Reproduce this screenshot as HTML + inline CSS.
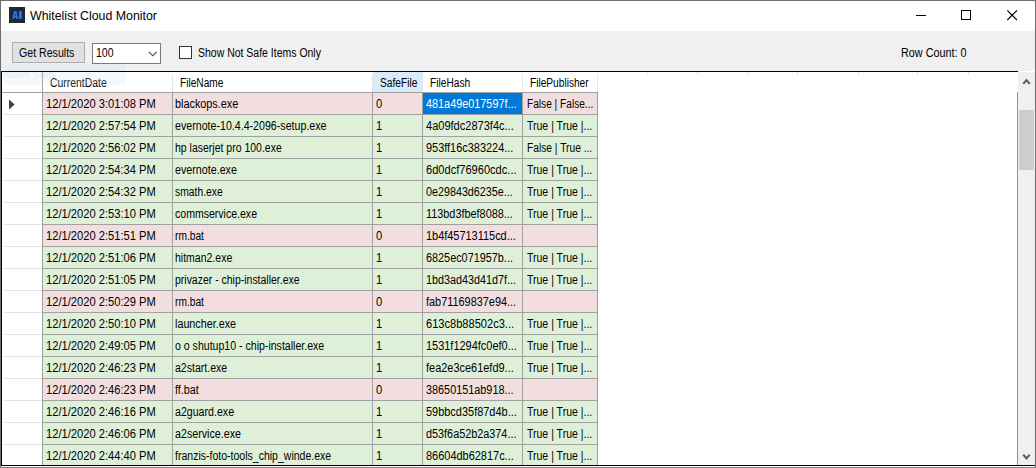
<!DOCTYPE html>
<html><head><meta charset="utf-8"><title>Whitelist Cloud Monitor</title>
<style>
html,body{margin:0;padding:0;}
body{width:1036px;height:468px;overflow:hidden;background:#fff;font-family:"Liberation Sans",sans-serif;font-size:12px;color:#000;position:relative;}
#win{position:absolute;left:0;top:0;width:1036px;height:468px;overflow:hidden;background:#fff;}
.t{position:absolute;white-space:nowrap;transform-origin:0 0;font-size:12px;line-height:14px;}
.tt{top:9px;}
.bt2{top:46px;}
.ht{top:76px;}
.ct{top:4px;}
.selt{color:#fff;}
#title{position:absolute;left:0;top:0;width:1036px;height:31px;background:#fff;}
#icon{position:absolute;left:9px;top:7px;width:16px;height:16px;background:#1e2733;}
#toolbar{position:absolute;left:0;top:31px;width:1036px;height:40px;background:#f0f0f0;}
#btn_{position:absolute;left:12px;top:42px;width:71px;height:19px;border:1px solid #adadad;background:#e1e1e1;}
#combo_{position:absolute;left:92px;top:43px;width:67px;height:19px;border:1px solid #7a7a7a;background:#fff;}
#chk_{position:absolute;left:179px;top:46px;width:11px;height:11px;border:1px solid #333;background:#fff;}
#grid{position:absolute;left:1px;top:71px;width:1034px;height:395px;background:#fff;overflow:hidden;}
#gridin{position:absolute;left:-1px;top:-71px;width:1036px;height:468px;}
.bt{position:absolute;background:#000;}
.hdr{position:absolute;top:72px;height:20px;}
.hdr i{position:absolute;right:0;top:2px;width:1px;height:18px;background:#e5e5e5;}
.hdr.hl{background:#d9ebf9;}
.hdr.hl i{display:none;}
#hline{position:absolute;left:2px;top:92px;width:596px;height:1px;background:#a0a0a0;}
.row{position:absolute;left:0;height:22px;width:1036px;}
.row .c{position:absolute;top:0;height:21px;border-right:1px solid #a0a0a0;border-bottom:1px solid #a0a0a0;}
.row.r .c{background:#f2dede;}
.row.g .c{background:#dff0d8;}
.row .c.sel{background:#0078d7;}
.rh{position:absolute;left:2px;top:0;width:40px;height:22px;border-right:1px solid #a0a0a0;background:#fff;}
.rh b{position:absolute;left:2px;bottom:0;width:38px;height:1px;background:#e3e3e3;}
#sb{position:absolute;left:1018px;top:72px;width:17px;height:393px;background:#f0f0f0;}
#sbl{position:absolute;left:1017px;top:92px;width:1px;height:373px;background:#909090;}
#thumb{position:absolute;left:1019px;top:110px;width:15px;height:60px;background:#cdcdcd;}
</style></head><body>
<div id="win">
<div id="title"><div id="icon"><svg width="16" height="16" viewBox="0 0 16 16" style="position:absolute;left:0;top:0"><path d="M3.3 12 L5 4 L7.5 4 L9.1 12 L7.3 12 L7 10.4 L5.4 10.4 L5.1 12 Z M5.7 8.9 L6.7 8.9 L6.25 6.3 Z" fill="#2a74ea" fill-rule="evenodd"/><rect x="9.9" y="4" width="2.9" height="8" fill="#2a74ea"/></svg></div>
<svg class="wc" style="position:absolute;left:905px;top:0" width="131" height="31" viewBox="0 0 131 31"><path d="M11 15.5 H21" stroke="#000" stroke-width="1" fill="none"/><rect x="56.5" y="10.5" width="9" height="9" stroke="#000" stroke-width="1" fill="none"/><path d="M102.3 10.3 L112 20 M112 10.3 L102.3 20" stroke="#000" stroke-width="1.1" fill="none"/></svg></div>
<span id="ttl" class="t tt" style="left:29.89px;transform:scaleX(1.0286);">Whitelist Cloud Monitor</span>
<div id="toolbar"></div>
<div id="btn_"></div><span id="btn" class="t bt2" style="left:19.31px;transform:scaleX(0.8840);">Get Results</span>
<div id="combo_"><svg width="10" height="7" viewBox="0 0 10 7" style="position:absolute;left:54.6px;top:7px"><path d="M0.9 0.9 L4.8 4.8 L8.7 0.9" stroke="#404040" stroke-width="1.1" fill="none"/></svg></div><span id="combo" class="t bt2" style="left:95.82px;transform:scaleX(0.8763);">100</span>
<div id="chk_"></div><span id="chk" class="t bt2" style="left:197.94px;transform:scaleX(0.8736);">Show Not Safe Items Only</span>
<span id="rc" class="t bt2" style="left:900.98px;transform:scaleX(0.9010);">Row Count: 0</span>
<div id="grid"><div id="gridin">
<div class="hdr" style="left:2px;width:41px"><i style="top:0;height:20px;background:#a0a0a0"></i></div>
<div class="hdr" style="left:43px;width:130px"><i></i></div><span id="h0" class="t ht" style="left:49.62px;transform:scaleX(0.8672);">CurrentDate</span>
<div class="hdr" style="left:173px;width:200px"><i></i></div><span id="h1" class="t ht" style="left:180.04px;transform:scaleX(0.8441);">FileName</span>
<div class="hdr hl" style="left:373px;width:50px"><i></i></div><span id="h2" class="t ht" style="left:379.97px;transform:scaleX(0.8502);">SafeFile</span>
<div class="hdr" style="left:423px;width:100px"><i></i></div><span id="h3" class="t ht" style="left:430.24px;transform:scaleX(0.8476);">FileHash</span>
<div class="hdr" style="left:523px;width:75px"><i></i></div><span id="h4" class="t ht" style="left:530.14px;transform:scaleX(0.8454);">FilePublisher</span>

<div id="hline"></div><div style="position:absolute;left:647px;top:72px;width:1px;height:2px;background:#e9e9e9"></div><div style="position:absolute;left:697px;top:72px;width:1px;height:2px;background:#dedede"></div><div style="position:absolute;left:747px;top:72px;width:1px;height:2px;background:#dedede"></div><div style="position:absolute;left:797px;top:72px;width:1px;height:2px;background:#dedede"></div><div style="position:absolute;left:858px;top:72px;width:1px;height:2px;background:#dedede"></div><div style="position:absolute;left:917px;top:72px;width:1px;height:2px;background:#dedede"></div><div style="position:absolute;left:968px;top:72px;width:1px;height:2px;background:#dedede"></div>
<div class="row r" style="top:93px"><div class="rh"><svg width="8" height="11" viewBox="0 0 8 11" style="position:absolute;left:7px;top:6px"><path d="M0 0.5 L5.6 5.5 L0 10.5 Z" fill="#404040"/></svg><b></b></div><div class="c" style="left:43px;width:129px"></div><span id="r0c0" class="t ct " style="left:46.30px;transform:scaleX(0.9300);">12/1/2020 3:01:08 PM</span><div class="c" style="left:173px;width:199px"></div><span id="r0c1" class="t ct " style="left:175.30px;transform:scaleX(0.9029);">blackops.exe</span><div class="c" style="left:373px;width:49px"></div><span id="r0c2" class="t ct " style="left:376.24px;transform:scaleX(0.9300);">0</span><div class="c sel" style="left:423px;width:99px"></div><span id="r0c3" class="t ct selt " style="left:426.20px;transform:scaleX(0.9044);">481a49e017597f...</span><div class="c" style="left:523px;width:74px"></div><span id="r0c4" class="t ct " style="left:526.90px;transform:scaleX(0.8448);">False | False...</span></div>
<div class="row g" style="top:115px"><div class="rh"><b></b></div><div class="c" style="left:43px;width:129px"></div><span id="r1c0" class="t ct " style="left:46.30px;transform:scaleX(0.9300);">12/1/2020 2:57:54 PM</span><div class="c" style="left:173px;width:199px"></div><span id="r1c1" class="t ct " style="left:175.30px;transform:scaleX(0.8871);">evernote-10.4.4-2096-setup.exe</span><div class="c" style="left:373px;width:49px"></div><span id="r1c2" class="t ct " style="left:375.80px;transform:scaleX(0.9300);">1</span><div class="c" style="left:423px;width:99px"></div><span id="r1c3" class="t ct " style="left:426.20px;transform:scaleX(0.9198);">4a09fdc2873f4c...</span><div class="c" style="left:523px;width:74px"></div><span id="r1c4" class="t ct " style="left:526.90px;transform:scaleX(0.8758);">True | True |...</span></div>
<div class="row g" style="top:137px"><div class="rh"><b></b></div><div class="c" style="left:43px;width:129px"></div><span id="r2c0" class="t ct " style="left:46.30px;transform:scaleX(0.9300);">12/1/2020 2:56:02 PM</span><div class="c" style="left:173px;width:199px"></div><span id="r2c1" class="t ct " style="left:175.30px;transform:scaleX(0.8745);">hp laserjet pro 100.exe</span><div class="c" style="left:373px;width:49px"></div><span id="r2c2" class="t ct " style="left:375.80px;transform:scaleX(0.9300);">1</span><div class="c" style="left:423px;width:99px"></div><span id="r2c3" class="t ct " style="left:426.20px;transform:scaleX(0.9109);">953ff16c383224...</span><div class="c" style="left:523px;width:74px"></div><span id="r2c4" class="t ct " style="left:526.90px;transform:scaleX(0.8526);">False | True ...</span></div>
<div class="row g" style="top:159px"><div class="rh"><b></b></div><div class="c" style="left:43px;width:129px"></div><span id="r3c0" class="t ct " style="left:46.30px;transform:scaleX(0.9300);">12/1/2020 2:54:34 PM</span><div class="c" style="left:173px;width:199px"></div><span id="r3c1" class="t ct " style="left:175.30px;transform:scaleX(0.8927);">evernote.exe</span><div class="c" style="left:373px;width:49px"></div><span id="r3c2" class="t ct " style="left:375.80px;transform:scaleX(0.9300);">1</span><div class="c" style="left:423px;width:99px"></div><span id="r3c3" class="t ct " style="left:426.20px;transform:scaleX(0.9231);">6d0dcf76960cdc...</span><div class="c" style="left:523px;width:74px"></div><span id="r3c4" class="t ct " style="left:526.90px;transform:scaleX(0.8758);">True | True |...</span></div>
<div class="row g" style="top:181px"><div class="rh"><b></b></div><div class="c" style="left:43px;width:129px"></div><span id="r4c0" class="t ct " style="left:46.30px;transform:scaleX(0.9300);">12/1/2020 2:54:32 PM</span><div class="c" style="left:173px;width:199px"></div><span id="r4c1" class="t ct " style="left:175.30px;transform:scaleX(0.8635);">smath.exe</span><div class="c" style="left:373px;width:49px"></div><span id="r4c2" class="t ct " style="left:375.80px;transform:scaleX(0.9300);">1</span><div class="c" style="left:423px;width:99px"></div><span id="r4c3" class="t ct " style="left:426.20px;transform:scaleX(0.8962);">0e29843d6235e...</span><div class="c" style="left:523px;width:74px"></div><span id="r4c4" class="t ct " style="left:526.90px;transform:scaleX(0.8758);">True | True |...</span></div>
<div class="row g" style="top:203px"><div class="rh"><b></b></div><div class="c" style="left:43px;width:129px"></div><span id="r5c0" class="t ct " style="left:46.30px;transform:scaleX(0.9300);">12/1/2020 2:53:10 PM</span><div class="c" style="left:173px;width:199px"></div><span id="r5c1" class="t ct " style="left:175.30px;transform:scaleX(0.8784);">commservice.exe</span><div class="c" style="left:373px;width:49px"></div><span id="r5c2" class="t ct " style="left:375.80px;transform:scaleX(0.9300);">1</span><div class="c" style="left:423px;width:99px"></div><span id="r5c3" class="t ct " style="left:426.20px;transform:scaleX(0.9056);">113bd3fbef8088...</span><div class="c" style="left:523px;width:74px"></div><span id="r5c4" class="t ct " style="left:526.90px;transform:scaleX(0.8758);">True | True |...</span></div>
<div class="row r" style="top:225px"><div class="rh"><b></b></div><div class="c" style="left:43px;width:129px"></div><span id="r6c0" class="t ct " style="left:46.30px;transform:scaleX(0.9300);">12/1/2020 2:51:51 PM</span><div class="c" style="left:173px;width:199px"></div><span id="r6c1" class="t ct " style="left:175.30px;transform:scaleX(0.8500);">rm.bat</span><div class="c" style="left:373px;width:49px"></div><span id="r6c2" class="t ct " style="left:376.24px;transform:scaleX(0.9300);">0</span><div class="c" style="left:423px;width:99px"></div><span id="r6c3" class="t ct " style="left:426.20px;transform:scaleX(0.9115);">1b4f45713115cd...</span><div class="c" style="left:523px;width:74px"></div></div>
<div class="row g" style="top:247px"><div class="rh"><b></b></div><div class="c" style="left:43px;width:129px"></div><span id="r7c0" class="t ct " style="left:46.30px;transform:scaleX(0.9300);">12/1/2020 2:51:06 PM</span><div class="c" style="left:173px;width:199px"></div><span id="r7c1" class="t ct " style="left:175.30px;transform:scaleX(0.8753);">hitman2.exe</span><div class="c" style="left:373px;width:49px"></div><span id="r7c2" class="t ct " style="left:375.80px;transform:scaleX(0.9300);">1</span><div class="c" style="left:423px;width:99px"></div><span id="r7c3" class="t ct " style="left:426.20px;transform:scaleX(0.9046);">6825ec071957b...</span><div class="c" style="left:523px;width:74px"></div><span id="r7c4" class="t ct " style="left:526.90px;transform:scaleX(0.8758);">True | True |...</span></div>
<div class="row g" style="top:269px"><div class="rh"><b></b></div><div class="c" style="left:43px;width:129px"></div><span id="r8c0" class="t ct " style="left:46.30px;transform:scaleX(0.9300);">12/1/2020 2:51:05 PM</span><div class="c" style="left:173px;width:199px"></div><span id="r8c1" class="t ct " style="left:175.30px;transform:scaleX(0.8725);">privazer - chip-installer.exe</span><div class="c" style="left:373px;width:49px"></div><span id="r8c2" class="t ct " style="left:375.80px;transform:scaleX(0.9300);">1</span><div class="c" style="left:423px;width:99px"></div><span id="r8c3" class="t ct " style="left:426.20px;transform:scaleX(0.8994);">1bd3ad43d41d7f...</span><div class="c" style="left:523px;width:74px"></div><span id="r8c4" class="t ct " style="left:526.90px;transform:scaleX(0.8758);">True | True |...</span></div>
<div class="row r" style="top:291px"><div class="rh"><b></b></div><div class="c" style="left:43px;width:129px"></div><span id="r9c0" class="t ct " style="left:46.30px;transform:scaleX(0.9300);">12/1/2020 2:50:29 PM</span><div class="c" style="left:173px;width:199px"></div><span id="r9c1" class="t ct " style="left:175.30px;transform:scaleX(0.8500);">rm.bat</span><div class="c" style="left:373px;width:49px"></div><span id="r9c2" class="t ct " style="left:376.24px;transform:scaleX(0.9300);">0</span><div class="c" style="left:423px;width:99px"></div><span id="r9c3" class="t ct " style="left:426.20px;transform:scaleX(0.9086);">fab71169837e94...</span><div class="c" style="left:523px;width:74px"></div></div>
<div class="row g" style="top:313px"><div class="rh"><b></b></div><div class="c" style="left:43px;width:129px"></div><span id="r10c0" class="t ct " style="left:46.30px;transform:scaleX(0.9300);">12/1/2020 2:50:10 PM</span><div class="c" style="left:173px;width:199px"></div><span id="r10c1" class="t ct " style="left:175.30px;transform:scaleX(0.8970);">launcher.exe</span><div class="c" style="left:373px;width:49px"></div><span id="r10c2" class="t ct " style="left:375.80px;transform:scaleX(0.9300);">1</span><div class="c" style="left:423px;width:99px"></div><span id="r10c3" class="t ct " style="left:426.20px;transform:scaleX(0.9230);">613c8b88502c3...</span><div class="c" style="left:523px;width:74px"></div><span id="r10c4" class="t ct " style="left:526.90px;transform:scaleX(0.8758);">True | True |...</span></div>
<div class="row g" style="top:335px"><div class="rh"><b></b></div><div class="c" style="left:43px;width:129px"></div><span id="r11c0" class="t ct " style="left:46.30px;transform:scaleX(0.9300);">12/1/2020 2:49:05 PM</span><div class="c" style="left:173px;width:199px"></div><span id="r11c1" class="t ct " style="left:175.30px;transform:scaleX(0.8804);">o o shutup10 - chip-installer.exe</span><div class="c" style="left:373px;width:49px"></div><span id="r11c2" class="t ct " style="left:375.80px;transform:scaleX(0.9300);">1</span><div class="c" style="left:423px;width:99px"></div><span id="r11c3" class="t ct " style="left:426.20px;transform:scaleX(0.9129);">1531f1294fc0ef0...</span><div class="c" style="left:523px;width:74px"></div><span id="r11c4" class="t ct " style="left:526.90px;transform:scaleX(0.8758);">True | True |...</span></div>
<div class="row g" style="top:357px"><div class="rh"><b></b></div><div class="c" style="left:43px;width:129px"></div><span id="r12c0" class="t ct " style="left:46.30px;transform:scaleX(0.9300);">12/1/2020 2:46:23 PM</span><div class="c" style="left:173px;width:199px"></div><span id="r12c1" class="t ct " style="left:175.30px;transform:scaleX(0.8779);">a2start.exe</span><div class="c" style="left:373px;width:49px"></div><span id="r12c2" class="t ct " style="left:375.80px;transform:scaleX(0.9300);">1</span><div class="c" style="left:423px;width:99px"></div><span id="r12c3" class="t ct " style="left:426.20px;transform:scaleX(0.9131);">fea2e3ce61efd9...</span><div class="c" style="left:523px;width:74px"></div><span id="r12c4" class="t ct " style="left:526.90px;transform:scaleX(0.8758);">True | True |...</span></div>
<div class="row r" style="top:379px"><div class="rh"><b></b></div><div class="c" style="left:43px;width:129px"></div><span id="r13c0" class="t ct " style="left:46.30px;transform:scaleX(0.9300);">12/1/2020 2:46:23 PM</span><div class="c" style="left:173px;width:199px"></div><span id="r13c1" class="t ct " style="left:175.30px;transform:scaleX(0.8989);">ff.bat</span><div class="c" style="left:373px;width:49px"></div><span id="r13c2" class="t ct " style="left:376.24px;transform:scaleX(0.9300);">0</span><div class="c" style="left:423px;width:99px"></div><span id="r13c3" class="t ct " style="left:426.20px;transform:scaleX(0.9045);">38650151ab918...</span><div class="c" style="left:523px;width:74px"></div></div>
<div class="row g" style="top:401px"><div class="rh"><b></b></div><div class="c" style="left:43px;width:129px"></div><span id="r14c0" class="t ct " style="left:46.30px;transform:scaleX(0.9300);">12/1/2020 2:46:16 PM</span><div class="c" style="left:173px;width:199px"></div><span id="r14c1" class="t ct " style="left:175.30px;transform:scaleX(0.8848);">a2guard.exe</span><div class="c" style="left:373px;width:49px"></div><span id="r14c2" class="t ct " style="left:375.80px;transform:scaleX(0.9300);">1</span><div class="c" style="left:423px;width:99px"></div><span id="r14c3" class="t ct " style="left:426.20px;transform:scaleX(0.9129);">59bbcd35f87d4b...</span><div class="c" style="left:523px;width:74px"></div><span id="r14c4" class="t ct " style="left:526.90px;transform:scaleX(0.8758);">True | True |...</span></div>
<div class="row g" style="top:423px"><div class="rh"><b></b></div><div class="c" style="left:43px;width:129px"></div><span id="r15c0" class="t ct " style="left:46.30px;transform:scaleX(0.9300);">12/1/2020 2:46:06 PM</span><div class="c" style="left:173px;width:199px"></div><span id="r15c1" class="t ct " style="left:175.30px;transform:scaleX(0.8919);">a2service.exe</span><div class="c" style="left:373px;width:49px"></div><span id="r15c2" class="t ct " style="left:375.80px;transform:scaleX(0.9300);">1</span><div class="c" style="left:423px;width:99px"></div><span id="r15c3" class="t ct " style="left:426.20px;transform:scaleX(0.9034);">d53f6a52b2a374...</span><div class="c" style="left:523px;width:74px"></div><span id="r15c4" class="t ct " style="left:526.90px;transform:scaleX(0.8758);">True | True |...</span></div>
<div class="row g" style="top:445px"><div class="rh"><b></b></div><div class="c" style="left:43px;width:129px"></div><span id="r16c0" class="t ct " style="left:46.30px;transform:scaleX(0.9300);">12/1/2020 2:44:40 PM</span><div class="c" style="left:173px;width:199px"></div><span id="r16c1" class="t ct " style="left:175.30px;transform:scaleX(0.8769);">franzis-foto-tools_chip_winde.exe</span><div class="c" style="left:373px;width:49px"></div><span id="r16c2" class="t ct " style="left:375.80px;transform:scaleX(0.9300);">1</span><div class="c" style="left:423px;width:99px"></div><span id="r16c3" class="t ct " style="left:426.20px;transform:scaleX(0.9131);">86604db62817c...</span><div class="c" style="left:523px;width:74px"></div><span id="r16c4" class="t ct " style="left:526.90px;transform:scaleX(0.8758);">True | True |...</span></div>
<div id="sb"><svg width="17" height="393" viewBox="0 0 17 393" style="position:absolute;left:0;top:0"><path d="M5.2 11.9 L8.5 8.2 L11.8 11.9" stroke="#606060" stroke-width="2.1" fill="none"/><path d="M5.2 382.6 L8.5 386.3 L11.8 382.6" stroke="#606060" stroke-width="2.1" fill="none"/></svg></div><div id="sbl"></div><div id="thumb"></div>
</div></div>
<div style="position:absolute;left:1px;top:64px;width:125px;height:7px;background:rgba(205,225,250,0.2)"></div>
<div style="position:absolute;left:2px;top:72px;width:124px;height:13px;background:rgba(205,225,250,0.2)"></div>
<div style="position:absolute;left:3px;top:67px;font-size:11px;line-height:14px;color:rgba(150,130,160,0.17);white-space:nowrap;width:60px;overflow:hidden">ndow Snip</div>
<!-- borders -->
<div class="bt" style="left:1px;top:71px;width:1017px;height:1px"></div>
<div class="bt" style="left:1px;top:71px;width:1px;height:395px"></div>
<div class="bt" style="left:1px;top:465px;width:1034px;height:1px"></div>
<div class="bt" style="left:0;top:0;width:1036px;height:1px;background:#6e6e6e"></div>
<div class="bt" style="left:0;top:0;width:1px;height:468px;background:#6e6e6e"></div>
<div class="bt" style="left:1035px;top:0;width:1px;height:468px;background:#6e6e6e"></div>
<div class="bt" style="left:0;top:467px;width:1036px;height:1px;background:#808080"></div>
</div>
</body></html>
